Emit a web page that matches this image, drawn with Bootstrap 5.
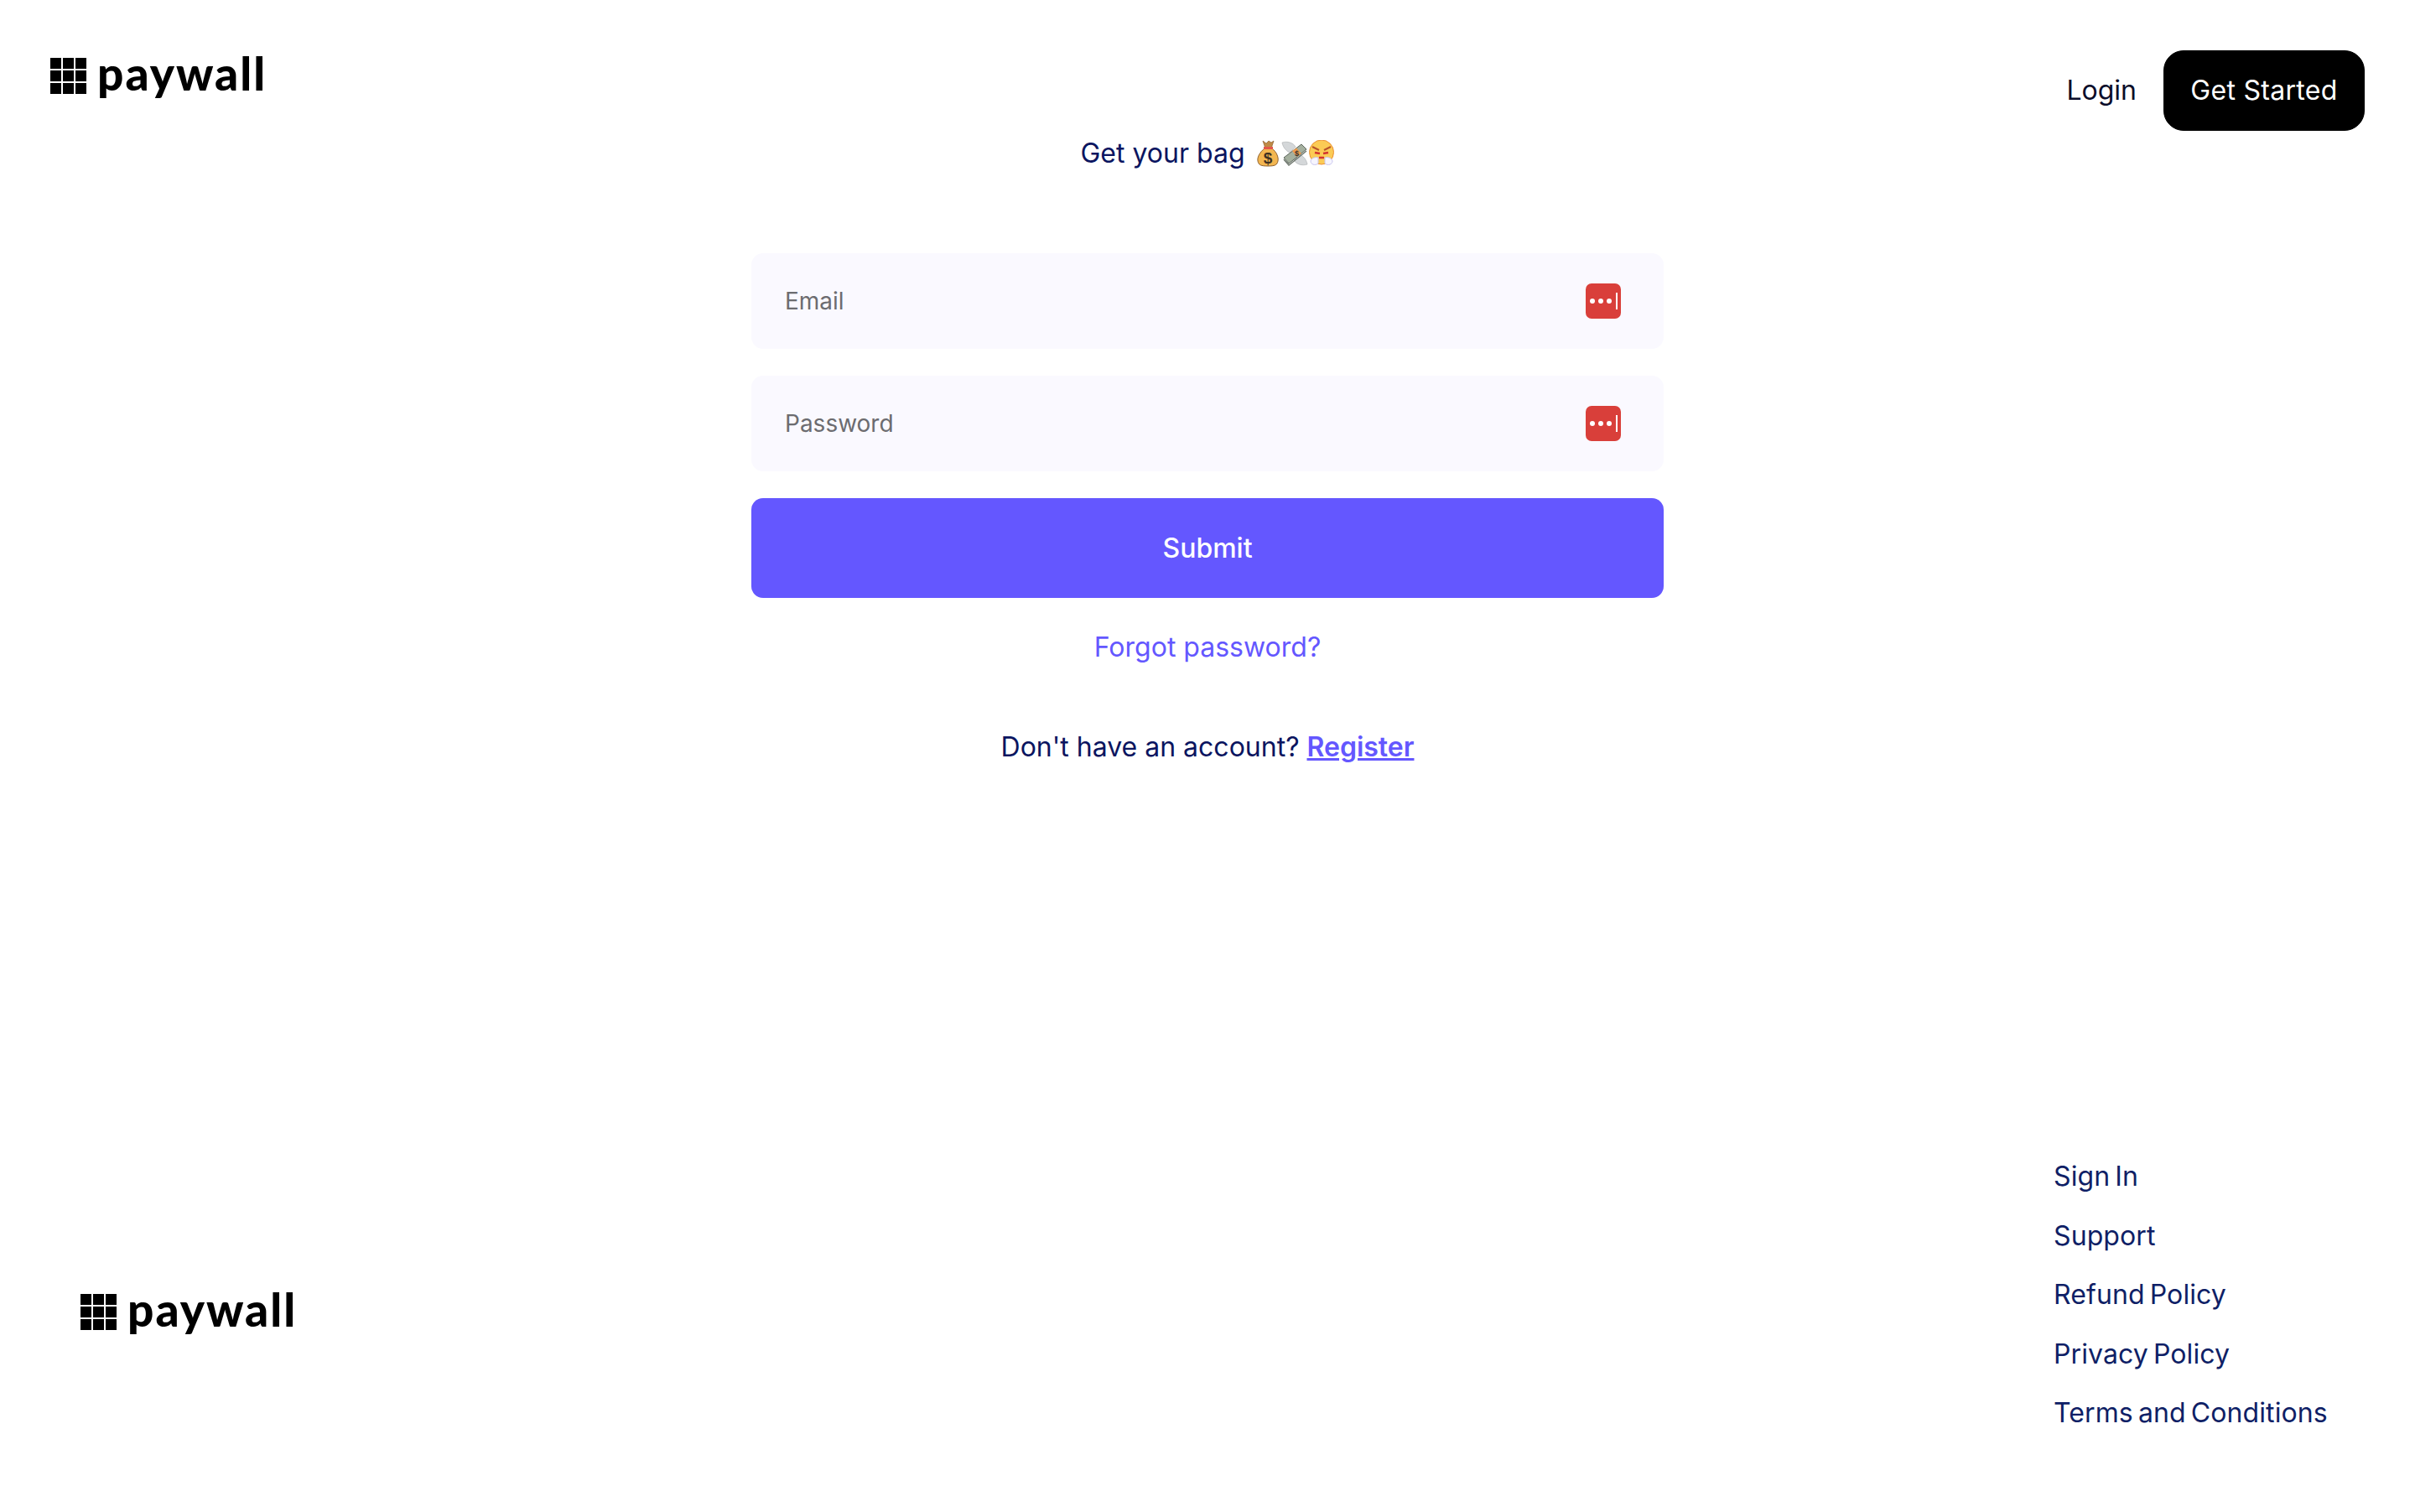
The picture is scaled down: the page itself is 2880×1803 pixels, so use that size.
<!DOCTYPE html>
<html lang="en">
<head>
    <meta charset="UTF-8">
    <meta name="viewport" content="width=device-width, initial-scale=1.0">
    <title>Paywall</title>
    <link href="https://cdn.jsdelivr.net/npm/bootstrap@5.3.0/dist/css/bootstrap.min.css" rel="stylesheet">
    <style>
        body {
            font-family: "Inter", "Liberation Sans", sans-serif;
            background-color: #fff;
            color: #0b1560;
        }
        .page-top {
            padding: 60px 60px 0 60px;
        }
        .brand-wrap {
            gap: 13px;
        }
        .brand-mark {
            display: grid;
            grid-template-columns: repeat(3, 13px);
            grid-auto-rows: 13px;
            gap: 2px;
        }
        .brand-mark i {
            background-color: #000;
        }
        .brand-name {
            font-family: "Lato", "Liberation Sans", sans-serif;
            font-size: 55px;
            font-weight: 900;
            line-height: 1;
            color: #000;
            letter-spacing: 2px;
            margin-bottom: 6px;
        }
        .foot-brand {
            margin-top: 40px;
        }
        .top-links {
            gap: 32px;
        }
        .login-link {
            font-size: 32px;
            color: #0b0d2a;
            text-decoration: none;
        }
        .start-btn {
            font-size: 32px;
            line-height: 1.2;
            letter-spacing: 0.3px;
            width: 240px;
            height: 96px;
            border-radius: 24px;
            background-color: #000;
            border-color: #000;
        }
        .tagline {
            font-size: 32px;
            line-height: 52px;
            padding-top: 1px;
        }
        .emoji-set {
            margin-left: 3px;
        }
        .emoji-set svg {
            width: 32px;
            height: 32px;
        }
        .signin-box {
            width: 1088px;
            margin-top: 93px;
        }
        .field-input {
            height: 114px;
            font-size: 28px;
            padding: 0 40px;
            background-color: #faf9ff;
            border: 0;
            border-radius: 14px;
        }
        .field-input::placeholder {
            color: #6c6c70;
        }
        .field-key {
            position: absolute;
            right: 51px;
            top: 36px;
            width: 42px;
            height: 42px;
        }
        .submit-btn {
            height: 119px;
            font-size: 32px;
            font-weight: 500;
            border-radius: 14px;
            border: 0;
            background-color: #6457ff;
            color: #fff;
        }
        .forgot-link {
            margin-top: 35px;
            font-size: 32px;
            color: #6457ff;
            text-decoration: none;
        }
        .register-line {
            margin-top: 71px;
            font-size: 32px;
            color: #0b1560;
        }
        .register-line a {
            color: #6457ff;
            font-weight: 600;
        }
        .page-foot {
            padding: 0 105px 98px 96px;
        }
        .foot-links {
            gap: 30.4px;
            width: 326px;
        }
        .foot-links a {
            font-size: 32px;
            line-height: 40px;
            letter-spacing: 0.1px;
            word-spacing: -3px;
            white-space: nowrap;
            color: #0f1f66;
            text-decoration: none;
        }
    </style>
</head>
<body class="min-vh-100 d-flex flex-column">
    <header class="page-top d-flex justify-content-between align-items-start">
        <div class="brand-wrap d-flex align-items-center">
            <div class="brand-mark"><i></i><i></i><i></i><i></i><i></i><i></i><i></i><i></i><i></i></div>
            <span class="brand-name">paywall</span>
        </div>
        <nav class="top-links d-flex align-items-center">
            <a href="#" class="login-link">Login</a>
            <a href="#" class="btn btn-dark start-btn d-flex align-items-center justify-content-center">Get Started</a>
        </nav>
    </header>

    <main class="text-center">
        <p class="tagline mb-0 d-flex justify-content-center align-items-center gap-2">
            <span>Get your bag</span>
            <span class="emoji-set d-inline-flex" role="img" aria-label="money bag, flying money, steaming face">
                <svg viewBox="0 0 32 32">
                    <path d="M10 1l4 3 3-3 3 2 3-2-3 9h-7z" fill="#c08a45" stroke="#8f6230" stroke-width="0.700"/>
                    <path d="M12 10h9c5 4 8 10 7 15-1 5-4 6-12 6S5 30 4 25c-1-5 3-11 8-15z" fill="#f3b650" stroke="#8f6230"/>
                    <rect x="11" y="8" width="11" height="3" fill="#e3574a"/>
                    <text x="16" y="28" font-size="19" font-weight="700" text-anchor="middle" fill="#3f3122" font-family="Liberation Sans">$</text>
                </svg>
                <svg viewBox="0 0 32 32">
                    <path d="M1 3c6-2 13 0 16 5l-7 7C6 13 2 9 1 3z" fill="#d4d7d9" stroke="#a9adaf" stroke-width="0.600"/>
                    <path d="M31 29c-6 2-13 0-16-5l7-7c4 2 8 6 9 12z" fill="#d4d7d9" stroke="#a9adaf" stroke-width="0.600"/>
                    <path d="M3 21L24 5l6 6L9 28z" fill="#a5b09f" stroke="#5d665d"/>
                    <path d="M3 23L9 30 30 13" fill="none" stroke="#6f786e" stroke-width="1.500"/>
                    <path d="M13 13l5-3.600 6 6.700-5 3.900z" fill="#ee9a4b"/>
                    <text x="18.500" y="19" font-size="9" font-weight="700" text-anchor="middle" fill="#333" font-family="Liberation Sans">$</text>
                </svg>
                <svg viewBox="0 0 32 32">
                    <circle cx="16" cy="14.500" r="14.500" fill="#fbcb55" stroke="#ec8f33"/>
                    <path d="M5 8l8 4M27 8l-8 4" stroke="#b8532b" stroke-width="2" fill="none"/>
                    <path d="M8 15l6 1M24 15l-6 1M13 21h6" stroke="#d2352f" stroke-width="2.500" fill="none"/>
                    <path d="M12 21c-3-1-8 0-9 4 0 4 5 6 9 3zM20 21c3-1 8 0 9 4 0 4-5 6-9 3z" fill="#f6f5ff" stroke="#c9c6ee"/>
                </svg>
            </span>
        </p>

        <form class="signin-box mx-auto d-flex flex-column">
            <div class="position-relative mb-4 pb-2">
                <input type="text" class="form-control field-input" placeholder="Email">
                <svg class="field-key" viewBox="0 0 42 42"><rect width="42" height="42" rx="7" fill="#d93f3a"/><circle cx="8" cy="21" r="3" fill="#fff"/><circle cx="18" cy="21" r="3" fill="#fff"/><circle cx="28" cy="21" r="3" fill="#fff"/><rect x="36" y="11" width="2" height="20" fill="#fff"/></svg>
            </div>
            <div class="position-relative mb-4 pb-2">
                <input type="password" class="form-control field-input" placeholder="Password">
                <svg class="field-key" viewBox="0 0 42 42"><rect width="42" height="42" rx="7" fill="#d93f3a"/><circle cx="8" cy="21" r="3" fill="#fff"/><circle cx="18" cy="21" r="3" fill="#fff"/><circle cx="28" cy="21" r="3" fill="#fff"/><rect x="36" y="11" width="2" height="20" fill="#fff"/></svg>
            </div>
            <button type="submit" class="btn submit-btn w-100">Submit</button>
            <a href="#" class="forgot-link">Forgot password?</a>
            <p class="register-line mb-0">Don't have an account? <a href="#">Register</a></p>
        </form>
    </main>

    <footer class="page-foot mt-auto d-flex justify-content-between align-items-center">
        <div class="foot-brand brand-wrap d-flex align-items-center">
            <div class="brand-mark"><i></i><i></i><i></i><i></i><i></i><i></i><i></i><i></i><i></i></div>
            <span class="brand-name">paywall</span>
        </div>
        <div class="foot-links d-flex flex-column align-items-start">
            <a href="#">Sign In</a>
            <a href="#">Support</a>
            <a href="#">Refund Policy</a>
            <a href="#">Privacy Policy</a>
            <a href="#">Terms and Conditions</a>
        </div>
    </footer>

    <script src="https://cdn.jsdelivr.net/npm/bootstrap@5.3.0/dist/js/bootstrap.bundle.min.js"></script>
</body>
</html>
